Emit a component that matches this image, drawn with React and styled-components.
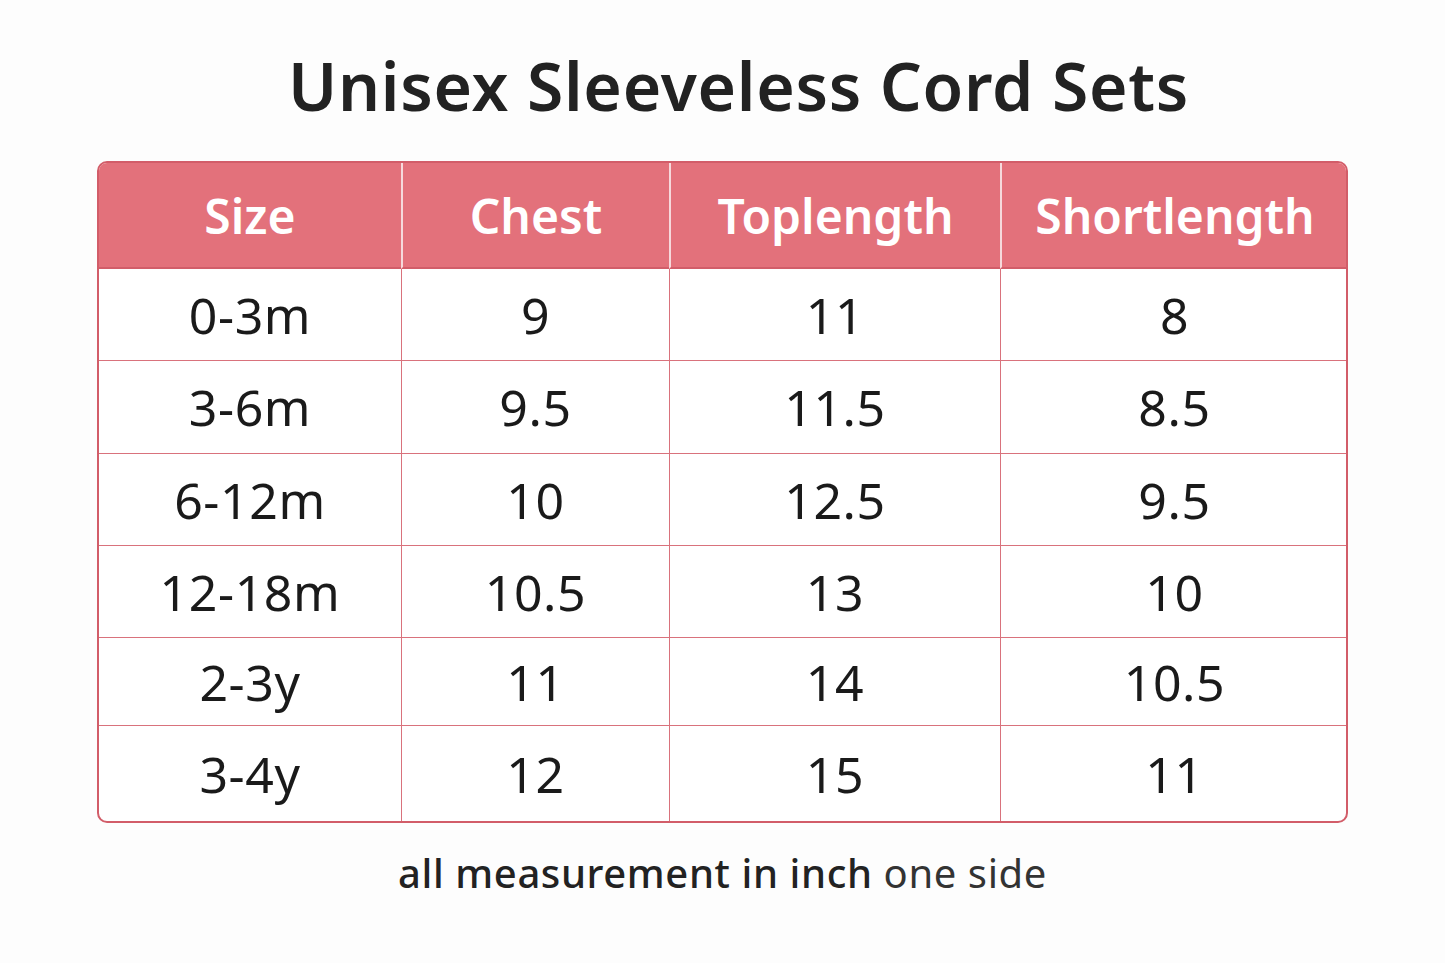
import React from "react";
import styled, { createGlobalStyle } from "styled-components";

const GlobalStyle = createGlobalStyle`
  html, body {
    margin: 0;
    padding: 0;
    background: #fdfdfd;
  }
  body {
    font-family: "Noto Sans", "Open Sans", sans-serif;
  }
`;

const headers = ["Size", "Chest", "Toplength", "Shortlength"];

const rows = [
  ["0-3m", "9", "11", "8"],
  ["3-6m", "9.5", "11.5", "8.5"],
  ["6-12m", "10", "12.5", "9.5"],
  ["12-18m", "10.5", "13", "10"],
  ["2-3y", "11", "14", "10.5"],
  ["3-4y", "12", "15", "11"],
];

const rowHeights = [91, 93, 92, 92, 88, 96];

const Page = styled.div`
  width: 1445px;
  height: 963px;
  display: flex;
  flex-direction: column;
  align-items: center;
  padding-top: 44px;
  box-sizing: border-box;
`;

const Title = styled.h1`
  margin: 0 0 0 32px;
  font-size: 66px;
  font-weight: 600;
  color: #222;
  line-height: 82px;
  letter-spacing: 0.7px;
`;

const Table = styled.div`
  margin-top: 35px;
  display: grid;
  grid-template-columns: 302px 268px 331px 348px;
  border: 2px solid #d25d69;
  border-radius: 10px;
  overflow: hidden;
  background: #fff;
  box-sizing: border-box;
  width: 1251px;
`;

const HeadCell = styled.div`
  height: 106px;
  background: #e3717b;
  color: #fff;
  font-size: 48px;
  font-weight: 600;
  display: flex;
  align-items: center;
  justify-content: center;
  border-left: ${(p) => (p.$first ? "none" : "2px solid #f6d9dc")};
  border-bottom: 2px solid #d25d69;
  box-sizing: border-box;
`;

const Cell = styled.div`
  height: ${(p) => p.$h}px;
  color: #1a1a1a;
  font-size: 50px;
  letter-spacing: 0.6px;
  display: flex;
  align-items: center;
  justify-content: center;
  border-left: ${(p) => (p.$first ? "none" : "1.5px solid #d9727c")};
  border-top: ${(p) => (p.$top ? "none" : "1.5px solid #d9727c")};
  box-sizing: border-box;
`;

const Note = styled.p`
  margin: 24px 0 0;
  font-size: 40px;
  font-weight: 500;
  letter-spacing: 0.6px;
  color: #222;
  line-height: 52px;
`;

const Light = styled.span`
  font-weight: 400;
  color: #333;
`;

export default function App() {
  return (
    <>
      <GlobalStyle />
      <Page>
        <Title>Unisex Sleeveless Cord Sets</Title>
        <Table>
          {headers.map((h, i) => (
            <HeadCell key={h} $first={i === 0}>
              {h}
            </HeadCell>
          ))}
          {rows.map((r, ri) =>
            r.map((v, ci) => (
              <Cell
                key={ri + "-" + ci}
                $first={ci === 0}
                $top={ri === 0}
                $h={rowHeights[ri]}
              >
                {v}
              </Cell>
            ))
          )}
        </Table>
        <Note>
          all measurement in inch <Light>one side</Light>
        </Note>
      </Page>
    </>
  );
}
